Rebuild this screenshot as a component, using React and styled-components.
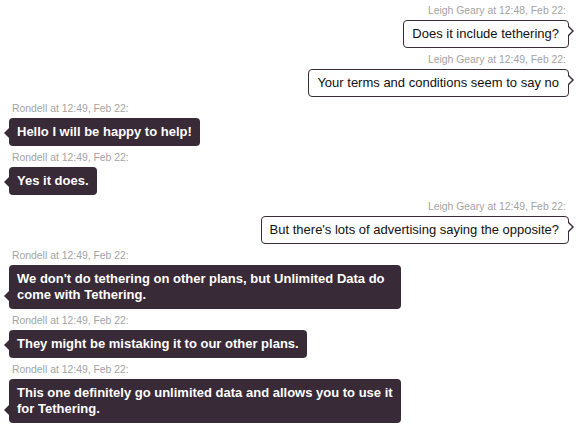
import React from "react";
import styled, { createGlobalStyle, css } from "styled-components";

const GlobalStyle = createGlobalStyle`
  body {
    margin: 0;
    background: #ffffff;
    font-family: "Liberation Sans", Arial, sans-serif;
    font-size: 13px;
  }
`;

const Thread = styled.div`
  padding: 4px 9px;
  display: flex;
  flex-direction: column;
`;

const Message = styled.div`
  display: flex;
  flex-direction: column;
  align-items: ${(p) => (p.$side === "right" ? "flex-end" : "flex-start")};
  margin-bottom: 5px;
`;

const Meta = styled.div`
  font-size: 0.8em;
  line-height: 13px;
  color: #a3a3a3;
  padding: 0 3px;
  margin-bottom: 3px;
`;

const Bubble = styled.div`
  position: relative;
  box-sizing: border-box;
  max-width: 392px;
  font-size: 13px;
  line-height: 16px;
  border-radius: 4px;

  ${(p) =>
    p.$side === "right"
      ? css`
          background: #ffffff;
          color: #111111;
          border: 1px solid #3a2c36;
          padding: 5px 9px 5px 8px;

          &::before,
          &::after {
            content: "";
            position: absolute;
            top: 5px;
            border-style: solid;
            border-color: transparent;
          }
          &::before {
            right: -6px;
            border-width: 5px 0 5px 5px;
            border-left-color: #3a2c36;
          }
          &::after {
            right: -4px;
            border-width: 5px 0 5px 5px;
            border-left-color: #ffffff;
          }
        `
      : css`
          background: #382a37;
          color: #ffffff;
          font-weight: bold;
          padding: 6px 8px;

          &::before {
            content: "";
            position: absolute;
            left: -5px;
            bottom: 8px;
            border-style: solid;
            border-color: transparent;
            border-width: 5px 5px 5px 0;
            border-right-color: #382a37;
          }
        `}
`;

const messages = [
  { side: "right", who: "Leigh Geary", time: "12:48", text: "Does it include tethering?" },
  { side: "right", who: "Leigh Geary", time: "12:49", text: "Your terms and conditions seem to say no" },
  { side: "left", who: "Rondell", time: "12:49", text: "Hello I will be happy to help!" },
  { side: "left", who: "Rondell", time: "12:49", text: "Yes it does." },
  { side: "right", who: "Leigh Geary", time: "12:49", text: "But there's lots of advertising saying the opposite?" },
  {
    side: "left",
    who: "Rondell",
    time: "12:49",
    text: "We don't do tethering on other plans, but Unlimited Data do come with Tethering.",
  },
  { side: "left", who: "Rondell", time: "12:49", text: "They might be mistaking it to our other plans." },
  {
    side: "left",
    who: "Rondell",
    time: "12:49",
    text: "This one definitely go unlimited data and allows you to use it for Tethering.",
  },
];

const App = () => {
  return (
    <>
      <GlobalStyle />
      <Thread>
        {messages.map((m, i) => (
          <Message key={i} $side={m.side}>
            <Meta>
              {m.who} at {m.time}, Feb 22:
            </Meta>
            <Bubble $side={m.side}>{m.text}</Bubble>
          </Message>
        ))}
      </Thread>
    </>
  );
};

export default App;
